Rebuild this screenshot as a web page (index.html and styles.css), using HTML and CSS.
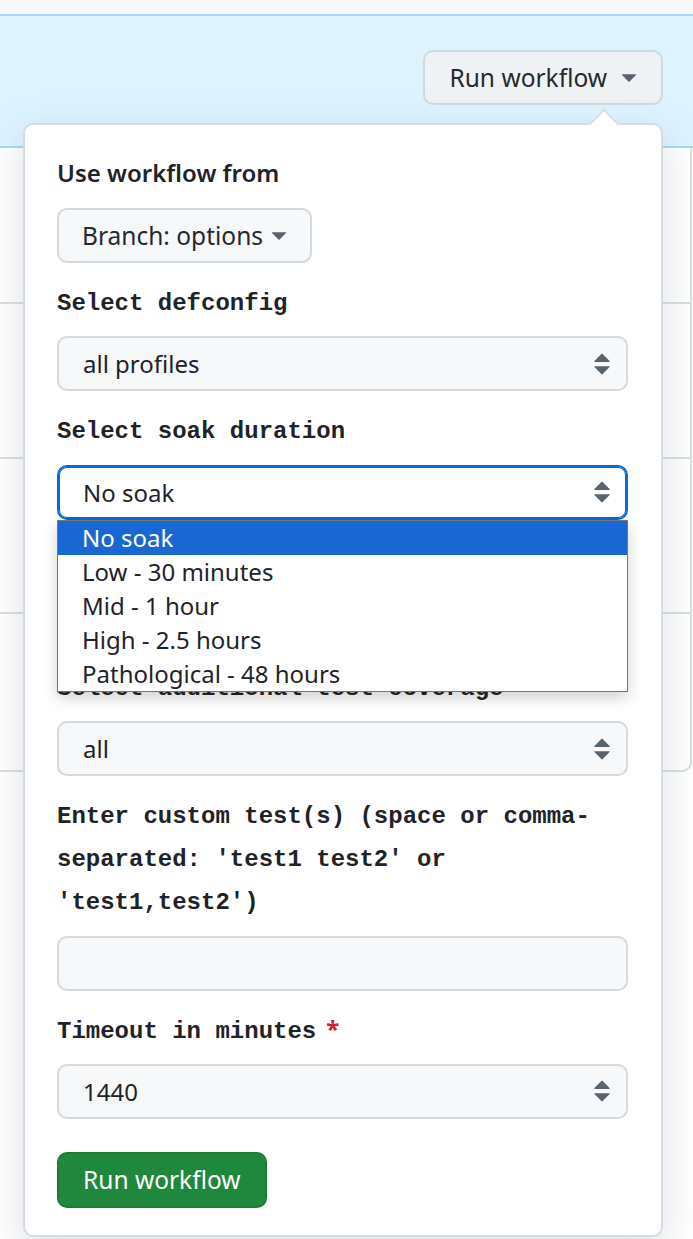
FILE: index.html
```html
<!DOCTYPE html>
<html lang="en">
<head>
<meta charset="utf-8">
<title>Run workflow</title>
<link rel="stylesheet" href="styles.css">
</head>
<body>
<div class="topstrip"></div>
<div class="banner">
  <div class="details">
    <button class="btn btn-summary" type="button">Run workflow
      <svg class="caret-down caret-lg" viewBox="4.3 6.9 7.4 4.1" aria-hidden="true"><path d="m4.427 7.427 3.396 3.396a.25.25 0 0 0 .354 0l3.396-3.396A.25.25 0 0 0 11.396 7H4.604a.25.25 0 0 0-.177.427Z"/></svg>
    </button>
    <div class="popover">
      <form class="form">
        <div class="group group-start">
          <div class="label label-sans">Use workflow from</div>
          <button class="btn btn-branch" type="button">Branch: options
            <svg class="caret-down" viewBox="4.3 6.9 7.4 4.1" aria-hidden="true"><path d="m4.427 7.427 3.396 3.396a.25.25 0 0 0 .354 0l3.396-3.396A.25.25 0 0 0 11.396 7H4.604a.25.25 0 0 0-.177.427Z"/></svg>
          </button>
        </div>

        <div class="group">
          <div class="label label-mono">Select defconfig</div>
          <div class="control select">
            <span>all profiles</span>
            <svg class="updown" viewBox="0 0 16 16" aria-hidden="true"><path d="M4.427 9.427l3.396 3.396a.25.25 0 00.354 0l3.396-3.396A.25.25 0 0011.396 9H4.604a.25.25 0 00-.177.427zM4.427 6.573l3.396-3.396a.25.25 0 01.354 0l3.396 3.396A.25.25 0 0111.396 7H4.604a.25.25 0 01-.177-.427z"/></svg>
          </div>
        </div>

        <div class="group group-open">
          <div class="label label-mono">Select soak duration</div>
          <div class="control select focused">
            <span>No soak</span>
            <svg class="updown" viewBox="0 0 16 16" aria-hidden="true"><path d="M4.427 9.427l3.396 3.396a.25.25 0 00.354 0l3.396-3.396A.25.25 0 0011.396 9H4.604a.25.25 0 00-.177.427zM4.427 6.573l3.396-3.396a.25.25 0 01.354 0l3.396 3.396A.25.25 0 0111.396 7H4.604a.25.25 0 01-.177-.427z"/></svg>
          </div>
          <ul class="listbox">
            <li class="option selected">No soak</li>
            <li class="option">Low - 30 minutes</li>
            <li class="option">Mid - 1 hour</li>
            <li class="option">High - 2.5 hours</li>
            <li class="option">Pathological - 48 hours</li>
          </ul>
        </div>

        <div class="group">
          <div class="label label-mono">Select test suite</div>
          <div class="control select">
            <span>default</span>
            <svg class="updown" viewBox="0 0 16 16" aria-hidden="true"><path d="M4.427 9.427l3.396 3.396a.25.25 0 00.354 0l3.396-3.396A.25.25 0 0011.396 9H4.604a.25.25 0 00-.177.427zM4.427 6.573l3.396-3.396a.25.25 0 01.354 0l3.396 3.396A.25.25 0 0111.396 7H4.604a.25.25 0 01-.177-.427z"/></svg>
          </div>
        </div>

        <div class="group">
          <div class="label label-mono">Select additional test coverage</div>
          <div class="control select">
            <span>all</span>
            <svg class="updown" viewBox="0 0 16 16" aria-hidden="true"><path d="M4.427 9.427l3.396 3.396a.25.25 0 00.354 0l3.396-3.396A.25.25 0 0011.396 9H4.604a.25.25 0 00-.177.427zM4.427 6.573l3.396-3.396a.25.25 0 01.354 0l3.396 3.396A.25.25 0 0111.396 7H4.604a.25.25 0 01-.177-.427z"/></svg>
          </div>
        </div>

        <div class="group">
          <div class="label label-mono">Enter custom test(s) (space or comma-separated: 'test1 test2' or 'test1,test2')</div>
          <div class="control input"></div>
        </div>

        <div class="group">
          <div class="label label-mono">Timeout in minutes<span class="req">*</span></div>
          <div class="control select">
            <span>1440</span>
            <svg class="updown" viewBox="0 0 16 16" aria-hidden="true"><path d="M4.427 9.427l3.396 3.396a.25.25 0 00.354 0l3.396-3.396A.25.25 0 0011.396 9H4.604a.25.25 0 00-.177.427zM4.427 6.573l3.396-3.396a.25.25 0 01.354 0l3.396 3.396A.25.25 0 0111.396 7H4.604a.25.25 0 01-.177-.427z"/></svg>
          </div>
        </div>

        <button class="btn btn-primary" type="button">Run workflow</button>
      </form>
    </div>
  </div>
</div>
<div class="runs">
  <div class="run run-first"></div>
  <div class="run"></div>
  <div class="run"></div>
  <div class="run run-last"></div>
</div>
</body>
</html>
```

FILE: styles.css
```css
* {
  box-sizing: border-box;
  margin: 0;
  padding: 0;
}

html, body {
  background: #ffffff;
}

body {
  width: 693px;
  height: 1239px;
  overflow: hidden;
  font-family: "Noto Sans", "Liberation Sans", sans-serif;
  color: #1f2328;
}

.topstrip {
  height: 14px;
  background: #f6f8fa;
}

.banner {
  height: 134px;
  background: #ddf4ff;
  border-top: 2px solid #a8d7fb;
  border-bottom: 2px solid #a8d7fb;
  display: flex;
  justify-content: flex-end;
  padding: 34px 30px 0 0;
}

.details {
  position: relative;
  height: 55px;
}

.btn {
  display: inline-flex;
  align-items: center;
  height: 55px;
  border-radius: 10px;
  font-family: "Noto Sans", "Liberation Sans", sans-serif;
  font-size: 24.5px;
  font-weight: 400;
  color: #25292e;
  cursor: pointer;
  white-space: nowrap;
}

.btn-summary {
  padding: 0 24px 0 24px;
  gap: 14px;
  background: #eff2f5;
  border: 2px solid #d1d9e0;
}

.caret-down {
  width: 16px;
  height: 8px;
  fill: #59636e;
}

.popover {
  position: absolute;
  top: calc(100% + 18px);
  right: 0;
  width: 640px;
  background: #ffffff;
  border: 2px solid #d6dce2;
  border-radius: 10px;
  box-shadow: 0 12px 40px rgba(140, 149, 159, 0.3);
  padding: 29px 33px 27px 32px;
  z-index: 10;
}

.popover::before {
  content: "";
  position: absolute;
  top: -12px;
  right: 46px;
  width: 20px;
  height: 20px;
  background: #ffffff;
  border-top: 2px solid #d6dce2;
  border-left: 2px solid #d6dce2;
  transform: rotate(45deg);
}

.form {
  display: flex;
  flex-direction: column;
  gap: 19px;
}

.group {
  display: flex;
  flex-direction: column;
  position: relative;
}

.group-start {
  align-items: flex-start;
}

.label {
  font-size: 24px;
  line-height: 43.2px;
  margin-bottom: 11px;
  color: #1f2328;
}

.label-sans {
  font-family: "Noto Sans", "Liberation Sans", sans-serif;
  font-weight: 600;
  line-height: 37.2px;
  margin-bottom: 17px;
}

.label-mono {
  font-family: "Liberation Mono", "DejaVu Sans Mono", monospace;
  font-weight: 700;
}

.req {
  font-family: "Noto Sans", "Liberation Sans", sans-serif;
  font-weight: 700;
  line-height: 20px;
  color: #d1242f;
  margin-left: 10px;
}

.btn-branch {
  padding: 0 23px 0 23px;
  gap: 8px;
  background: #f6f8fa;
  border: 2px solid #d1d9e0;
}

.control {
  height: 55px;
  border: 2px solid #d3dae0;
  border-radius: 10px;
  background: #f6f8fa;
  display: flex;
  align-items: center;
  justify-content: space-between;
  padding: 0 7px 0 24px;
  font-size: 24px;
  color: #1f2328;
}

.control.focused {
  background: #ffffff;
  border-color: #0969da;
  box-shadow: inset 0 0 0 1px #0969da;
}

.updown {
  width: 34px;
  height: 34px;
  fill: #59636e;
  flex: none;
}

.listbox {
  list-style: none;
  position: absolute;
  top: 100%;
  left: 0;
  right: 0;
  background: #ffffff;
  border: 1px solid #767676;
  box-shadow: 0 6px 14px rgba(0, 0, 0, 0.18);
  z-index: 5;
}

.option {
  height: 34px;
  line-height: 34px;
  padding-left: 24px;
  font-size: 24px;
  color: #1f2328;
}

.option.selected {
  background: #1967d2;
  color: #ffffff;
}

.btn-primary {
  align-self: flex-start;
  margin-top: 14px;
  height: 56px;
  padding: 0 24px;
  background: #1f883d;
  color: #ffffff;
  border: 2px solid rgba(31, 35, 40, 0.15);
}

.runs {
  width: 692px;
  border-right: 2px solid #d8dee4;
  border-bottom: 2px solid #d8dee4;
  border-bottom-right-radius: 10px;
}

.run {
  height: 155px;
  border-bottom: 2px solid #d8dee4;
}

.run-first {
  height: 156px;
}

.run-last {
  height: 156px;
  border-bottom: none;
}
```
